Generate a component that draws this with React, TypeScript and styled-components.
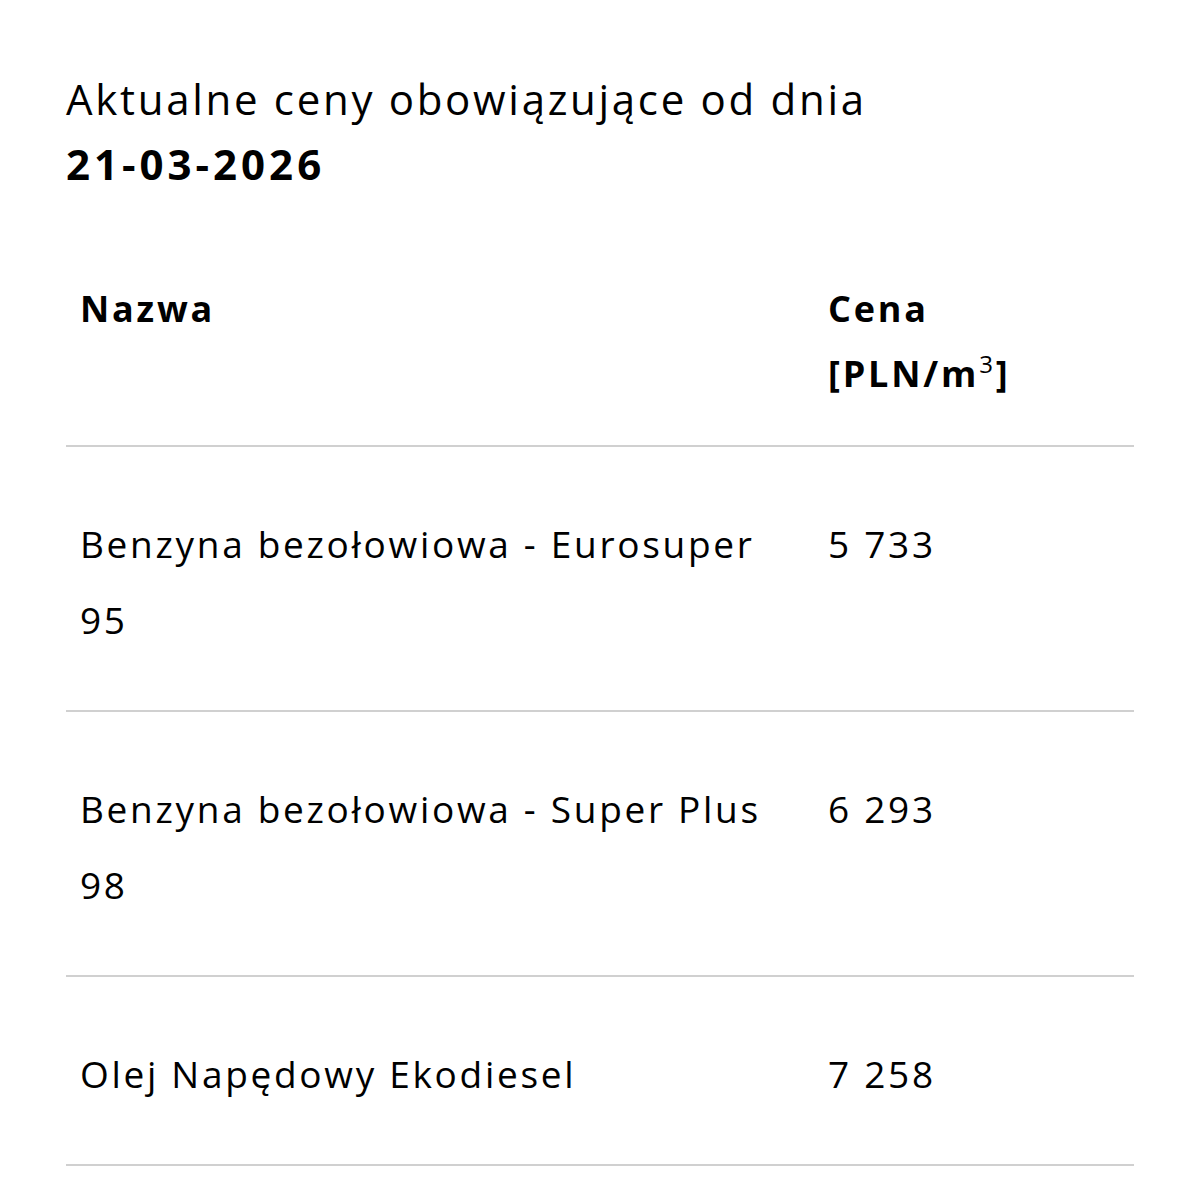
import React from 'react';
import styled, { createGlobalStyle } from 'styled-components';

const GlobalStyle = createGlobalStyle`
  html, body {
    margin: 0;
    padding: 0;
    background: #ffffff;
  }

  body {
    font-family: 'Open Sans', Lato, 'Noto Sans', sans-serif;
    color: #000000;
  }
`;

export const Page = styled.main`
  width: 1200px;
  box-sizing: border-box;
  padding: 66px 66px 28px 66px;
`;

export const Heading = styled.h2`
  margin: 0;
  font-size: 42px;
  font-weight: 400;
  line-height: 65px;
  letter-spacing: 2.7px;
  color: #000000;
`;

export const HeadingDate = styled.strong`
  display: block;
  font-weight: 700;
  letter-spacing: 4px;
`;

export const PriceTable = styled.table`
  width: 1068px;
  margin-top: 80px;
  border-collapse: collapse;
  table-layout: fixed;
`;

export const NameCol = styled.col`
  width: 748px;
`;

export const PriceCol = styled.col`
  width: 320px;
`;

export const HeadRow = styled.tr`
  border-bottom: 2px solid #d0d0d0;
`;

export const HeadCell = styled.th`
  padding: 0 14px 39px 14px;
  text-align: left;
  vertical-align: top;
  font-size: 36px;
  font-weight: 700;
  line-height: 65px;
  letter-spacing: 2.8px;

  sup {
    font-size: 24px;
    font-weight: 400;
    line-height: 0;
    vertical-align: 14px;
  }
`;

export const Row = styled.tr`
  border-bottom: 2px solid #d0d0d0;
`;

export const Cell = styled.td`
  padding: 59px 14px 52px 14px;
  vertical-align: top;
  font-size: 37px;
  font-weight: 400;
  line-height: 76px;
  letter-spacing: 2.7px;
`;

type Fuel = {
  name: string;
  price: string;
};

const fuels: Fuel[] = [
  { name: 'Benzyna bezołowiowa - Eurosuper 95', price: '5 733' },
  { name: 'Benzyna bezołowiowa - Super Plus 98', price: '6 293' },
  { name: 'Olej Napędowy Ekodiesel', price: '7 258' }
];

export default function App() {
  return (
    <>
      <GlobalStyle />
      <Page>
        <Heading>
          Aktualne ceny obowiązujące od dnia
          <HeadingDate>21-03-2026</HeadingDate>
        </Heading>

        <PriceTable>
          <colgroup>
            <NameCol />
            <PriceCol />
          </colgroup>
          <thead>
            <HeadRow>
              <HeadCell>Nazwa</HeadCell>
              <HeadCell>
                Cena
                <br />
                [PLN/m<sup>3</sup>]
              </HeadCell>
            </HeadRow>
          </thead>
          <tbody>
            {fuels.map((fuel) => (
              <Row key={fuel.name}>
                <Cell>{fuel.name}</Cell>
                <Cell>{fuel.price}</Cell>
              </Row>
            ))}
          </tbody>
        </PriceTable>
      </Page>
    </>
  );
}
